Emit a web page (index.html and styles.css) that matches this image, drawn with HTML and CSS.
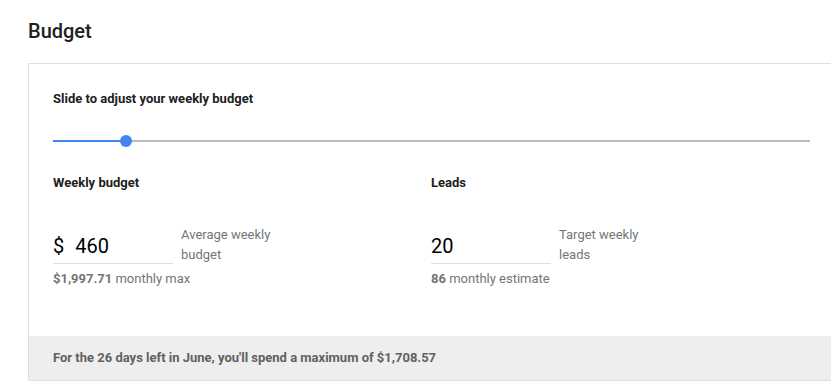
FILE: index.html
```html
<!DOCTYPE html>
<html lang="en">
<head>
    <meta charset="UTF-8">
    <meta name="viewport" content="width=device-width, initial-scale=1.0">
    <title>Budget</title>
    <link rel="stylesheet" href="styles.css">
</head>
<body>
    <div class="page">
        <h2 class="title">Budget</h2>
        <div class="card">
            <div class="card-body">
                <p class="label">Slide to adjust your weekly budget</p>
                <div class="slider">
                    <div class="slider-fill" style="width: 73px"></div>
                    <div class="slider-thumb"></div>
                    <div class="slider-rest"></div>
                </div>
                <div class="fields">
                    <div class="field">
                        <p class="label">Weekly budget</p>
                        <div class="field-row">
                            <div class="input-box">
                                <span class="prefix">$</span>
                                <span class="value">460</span>
                            </div>
                            <div class="hint">Average weekly<br>budget</div>
                        </div>
                        <p class="sub"><strong>$1,997.71</strong> monthly max</p>
                    </div>
                    <div class="field">
                        <p class="label">Leads</p>
                        <div class="field-row">
                            <div class="input-box">
                                <span class="value">20</span>
                            </div>
                            <div class="hint">Target weekly<br>leads</div>
                        </div>
                        <p class="sub"><strong>86</strong> monthly estimate</p>
                    </div>
                </div>
            </div>
            <div class="card-footer">
                For the 26 days left in June, you'll spend a maximum of $1,708.57
            </div>
        </div>
    </div>
</body>
</html>
```

FILE: styles.css
```css
body {
    font-family: Roboto, "Noto Sans", Arial, sans-serif;
    margin: 0;
    padding: 0;
    background-color: #fff;
    color: #212121;
}
.page {
    padding: 18px 0 0 28px;
}
.title {
    font-size: 20px;
    font-weight: 500;
    margin: 0;
    line-height: 26px;
    color: #212121;
}
.card {
    margin-top: 19px;
    width: 802px;
    border-top: 1px solid #e0e0e0;
    border-left: 1px solid #e0e0e0;
    border-bottom: 1px solid #e0e0e0;
}
.card-body {
    padding: 27px 21px 49px 24px;
}
.label {
    font-size: 13px;
    font-weight: 700;
    margin: 0;
    line-height: 16px;
    color: #212121;
}
.slider {
    display: flex;
    align-items: center;
    margin-top: 26px;
    height: 16px;
}
.slider-fill {
    height: 2px;
    background-color: #4285f4;
    margin-right: -6px;
}
.slider-thumb {
    width: 12px;
    height: 12px;
    border-radius: 50%;
    background-color: #4285f4;
    position: relative;
    z-index: 1;
}
.slider-rest {
    flex: 1;
    height: 2px;
    background-color: #bdbdbd;
    margin-left: -6px;
}
.fields {
    display: flex;
    margin-top: 26px;
}
.field {
    width: 378px;
}
.field-row {
    display: flex;
    align-items: flex-start;
    margin-top: 37px;
}
.input-box {
    width: 120px;
    height: 36px;
    border-bottom: 1px solid #e0e0e0;
    display: flex;
    align-items: flex-end;
    font-size: 20px;
    color: #000;
    line-height: 28px;
    box-sizing: border-box;
    padding-bottom: 3px;
}
.prefix {
    margin-right: 11px;
}
.hint {
    margin-left: 8px;
    margin-top: -3px;
    font-size: 13px;
    line-height: 20px;
    color: #757575;
}
.sub {
    margin: 6px 0 0;
    font-size: 13px;
    line-height: 16px;
    color: #757575;
}
.sub strong {
    font-weight: 700;
}
.card-footer {
    background-color: #eeeeee;
    height: 44px;
    box-sizing: border-box;
    padding: 14px 24px 0;
    font-size: 13px;
    font-weight: 700;
    line-height: 16px;
    color: #616161;
}
```
